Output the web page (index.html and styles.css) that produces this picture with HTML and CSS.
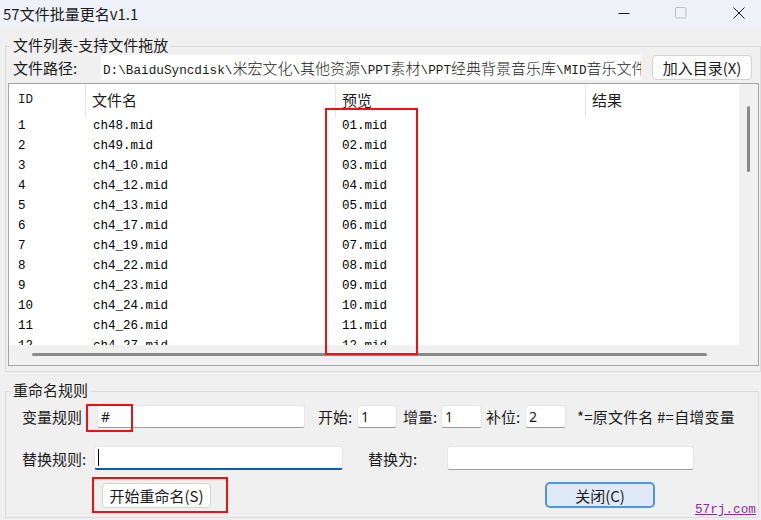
FILE: index.html
```html
<!DOCTYPE html>
<html lang="zh-CN">
<head>
<meta charset="utf-8">
<title>57文件批量更名v1.1</title>
<link rel="stylesheet" href="styles.css">
</head>
<body>
<div class="window">
  <header class="titlebar">
    <span class="title">57文件批量更名v1.1</span>
    <div class="caption-btns">
      <span class="cap-btn">
        <svg width="12" height="12" viewBox="0 0 12 12"><path d="M0.5 6.5H11.5" stroke="#1b1b1b" stroke-width="1"/></svg>
      </span>
      <span class="cap-btn">
        <svg width="12" height="12" viewBox="0 0 12 12"><rect x="0.5" y="0.5" width="10.5" height="10.5" rx="1.5" fill="none" stroke="#bdbdbd" stroke-width="1"/></svg>
      </span>
      <span class="cap-btn cap-close">
        <svg width="12" height="12" viewBox="0 0 12 12"><path d="M0.5 0.5L11.5 11.5M11.5 0.5L0.5 11.5" stroke="#1b1b1b" stroke-width="1"/></svg>
      </span>
    </div>
  </header>

  <main class="client">
    <section class="group group-files">
      <div class="group-title">文件列表-支持文件拖放</div>
      <div class="path-row">
        <span class="lbl lbl-path">文件路径:</span>
        <div class="path-box">D:\BaiduSyncdisk\<span class="cjk">米宏文化</span>\<span class="cjk">其他资源</span>\PPT<span class="cjk">素材</span>\PPT<span class="cjk">经典背景音乐库</span>\MID<span class="cjk">音乐文件</span></div>
        <button class="btn btn-add">加入目录(X)</button>
      </div>

      <div class="listview">
        <div class="list-viewport">
          <div class="list-head">
            <div class="hcell mono">ID</div>
            <div class="hcell">文件名</div>
            <div class="hcell">预览</div>
            <div class="hcell last">结果</div>
          </div>
          <div class="list-rows">
            <div class="row"><span>1</span><span>ch48.mid</span><span>01.mid</span><span></span></div>
            <div class="row"><span>2</span><span>ch49.mid</span><span>02.mid</span><span></span></div>
            <div class="row"><span>3</span><span>ch4_10.mid</span><span>03.mid</span><span></span></div>
            <div class="row"><span>4</span><span>ch4_12.mid</span><span>04.mid</span><span></span></div>
            <div class="row"><span>5</span><span>ch4_13.mid</span><span>05.mid</span><span></span></div>
            <div class="row"><span>6</span><span>ch4_17.mid</span><span>06.mid</span><span></span></div>
            <div class="row"><span>7</span><span>ch4_19.mid</span><span>07.mid</span><span></span></div>
            <div class="row"><span>8</span><span>ch4_22.mid</span><span>08.mid</span><span></span></div>
            <div class="row"><span>9</span><span>ch4_23.mid</span><span>09.mid</span><span></span></div>
            <div class="row"><span>10</span><span>ch4_24.mid</span><span>10.mid</span><span></span></div>
            <div class="row"><span>11</span><span>ch4_26.mid</span><span>11.mid</span><span></span></div>
            <div class="row"><span>12</span><span>ch4_27.mid</span><span>12.mid</span><span></span></div>
            <div class="row"><span>13</span><span>ch4_28.mid</span><span>13.mid</span><span></span></div>
          </div>
        </div>
        <div class="vscroll"><span class="vthumb"></span></div>
        <div class="hscroll"><span class="hthumb"></span></div>
        <div class="corner"></div>
      </div>
    </section>

    <section class="group group-rules">
      <div class="group-title">重命名规则</div>

      <div class="rule-row row-var">
        <span class="lbl lbl-var">变量规则</span>
        <div class="edit edit-var">#</div>
        <span class="lbl lbl-start">开始:</span>
        <div class="edit edit-num">1</div>
        <span class="lbl lbl-step">增量:</span>
        <div class="edit edit-num2">1</div>
        <span class="lbl lbl-pad">补位:</span>
        <div class="edit edit-num2">2</div>
        <span class="hint">*=原文件名 #=自增变量</span>
      </div>

      <div class="rule-row row-rep">
        <span class="lbl lbl-rep">替换规则:</span>
        <div class="edit edit-rep focused"><span class="caret"></span></div>
        <span class="lbl lbl-with">替换为:</span>
        <div class="edit edit-with"></div>
      </div>

      <div class="rule-row row-act">
        <button class="btn btn-start">开始重命名(S)</button>
        <button class="btn btn-close">关闭(C)</button>
        <a class="site-link" href="#">57rj.com</a>
      </div>
    </section>
  </main>

  <!-- highlight frames drawn over the controls -->
  <div class="hl hl-preview"></div>
  <div class="hl hl-var"></div>
  <div class="hl hl-start"></div>
</div>
</body>
</html>
```

FILE: styles.css
```css
* { box-sizing: border-box; }

html, body {
  margin: 0;
  padding: 0;
}

body {
  background: #f0f0f0;
  font-family: "Noto Sans CJK SC", "Noto Sans", sans-serif;
  font-size: 15px;
  color: #1b1b1b;
}

.window {
  position: relative;
  width: 761px;
  height: 520px;
  overflow: hidden;
  background: #f0f0f0;
}

/* ---------- title bar ---------- */
.titlebar {
  height: 28px;
  display: flex;
  align-items: flex-start;
  background: #eef2f8;
}

.title {
  padding-left: 3px;
  line-height: 27px;
  font-size: 15px;
}

.caption-btns {
  margin-left: auto;
  display: flex;
}

.cap-btn {
  width: 57px;
  height: 26px;
  display: flex;
  align-items: center;
  justify-content: center;
}

.cap-btn.cap-close {
  width: 52px;
  padding-left: 8px;
}

/* ---------- group boxes ---------- */
.group {
  border: 1px solid #dcdcdc;
  margin-left: 5px;
}

.group-title {
  width: fit-content;
  height: 18px;
  margin: -11px 0 0 3px;
  padding: 0 2px;
  line-height: 18px;
  background: #f0f0f0;
  white-space: nowrap;
}

.group-files {
  width: 756px;
  margin-top: 18px;
  padding: 0 0 5px 2px;
}

.group-rules {
  width: 754px;
  margin-top: 19px;
  padding: 0 0 9px 0;
}

.group-rules .group-title {
  margin-left: 5px;
}

.lbl {
  white-space: nowrap;
}

/* ---------- path row ---------- */
.path-row {
  display: flex;
  height: 25px;
  margin-top: 1px;
  padding-left: 5px;
}

.lbl-path {
  width: 88px;
  line-height: 25px;
}

.path-box {
  width: 540px;
  height: 25px;
  padding-left: 2px;
  background: #fff;
  font-family: "Liberation Mono", "Noto Sans CJK SC", monospace;
  font-size: 12.7px;
  line-height: 25px;
  white-space: nowrap;
  overflow: hidden;
}

.path-box .cjk {
  font-family: "Noto Sans CJK SC", sans-serif;
  font-size: 15px;
  font-weight: 300;
}

.btn {
  padding: 0;
  font-family: inherit;
  font-size: 15px;
  line-height: 1;
  color: #1b1b1b;
  background: #fdfdfd;
  border: 1px solid #d3d3d3;
  border-radius: 4px;
}

.btn-add {
  width: 100px;
  height: 25px;
  margin-left: 11px;
}

/* ---------- list view ---------- */
.listview {
  width: 751px;
  height: 283px;
  margin-top: 3px;
  border: 1px solid #a3a3a3;
  background: #fff;
  display: grid;
  grid-template-columns: 730px 1fr;
  grid-template-rows: 261px 1fr;
}

.list-viewport {
  overflow: hidden;
}

.list-head {
  display: grid;
  grid-template-columns: 77px 250px 250px 1fr;
  height: 32px;
}

.hcell {
  padding-left: 6px;
  line-height: 32px;
  border-right: 1px solid #e5e5e5;
  margin-bottom: 2px;
  white-space: nowrap;
}

.hcell.mono {
  padding-left: 9px;
  font-family: "Liberation Mono", monospace;
  font-size: 12.5px;
  line-height: 33px;
}

.hcell.last {
  border-right: none;
}

.row {
  display: grid;
  grid-template-columns: 77px 250px 250px 1fr;
  height: 20px;
  font-family: "Liberation Mono", monospace;
  font-size: 12.5px;
  line-height: 20px;
  color: #000;
}

.row span:nth-child(1) { padding-left: 9px; }
.row span:nth-child(2) { padding-left: 7px; }
.row span:nth-child(3) { padding-left: 6px; }

.vscroll {
  background: #f0f0f0;
  padding: 22px 0 0 8px;
}

.vthumb {
  display: block;
  width: 3px;
  height: 66px;
  border-radius: 2px;
  background: #8a8a8a;
}

.hscroll {
  background: #f0f0f0;
  padding: 8px 0 0 23px;
}

.hthumb {
  display: block;
  width: 675px;
  height: 3px;
  border-radius: 2px;
  background: #8a8a8a;
}

.corner {
  background: #f0f0f0;
}

/* ---------- rename rules ---------- */
.rule-row {
  display: flex;
  align-items: center;
  padding-left: 16px;
}

.row-var {
  height: 23px;
  margin-top: 6px;
}

.row-rep {
  height: 24px;
  margin-top: 18px;
}

.row-act {
  height: 26px;
  margin-top: 12px;
  align-items: flex-start;
}

.edit {
  height: 100%;
  padding-left: 3px;
  background: #fff;
  border: 1px solid #e6e6e6;
  border-bottom-color: #9c9c9c;
  border-radius: 3px;
  font-family: "Noto Sans", "Liberation Sans", sans-serif;
  font-size: 14px;
  line-height: 21px;
  display: flex;
  align-items: center;
}

.edit.focused {
  border-bottom: 2px solid #005fb8;
}

.caret {
  display: block;
  width: 1px;
  height: 17px;
  background: #000;
}

.lbl-var   { width: 75px; }
.edit-var  { width: 208px; }
.lbl-start { width: 39px; margin-left: 13px; }
.edit-num  { width: 40px; }
.lbl-step  { width: 38px; margin-left: 6px; }
.edit-num2 { width: 41px; }
.lbl-pad   { width: 39px; margin-left: 4px; }
.hint      { margin-left: 11px; white-space: nowrap; letter-spacing: 0.2px; }

.lbl-rep   { width: 72px; }
.edit-rep  { width: 249px; }
.lbl-with  { width: 79px; margin-left: 25px; }
.edit-with { width: 247px; }

.btn-start {
  width: 109px;
  height: 25px;
  margin: 1px 0 0 80px;
}

.btn-close {
  width: 110px;
  height: 26px;
  margin-left: 334px;
  background: #dfeaf6;
  border: 2px solid #4f97de;
  border-radius: 5px;
}

.site-link {
  margin: 20px 0 0 40px;
  font-family: "Liberation Mono", monospace;
  font-size: 12.7px;
  line-height: 16px;
  color: #8e2a9c;
  text-decoration: underline;
}

/* ---------- highlight frames ---------- */
.hl {
  position: absolute;
  border: 2px solid #ee1111;
}

.hl-preview { left: 325px; top: 108px; width: 93px; height: 247px; }
.hl-var     { left: 86px;  top: 404px; width: 47px; height: 28px; }
.hl-start   { left: 92px;  top: 477px; width: 136px; height: 36px; }
```
